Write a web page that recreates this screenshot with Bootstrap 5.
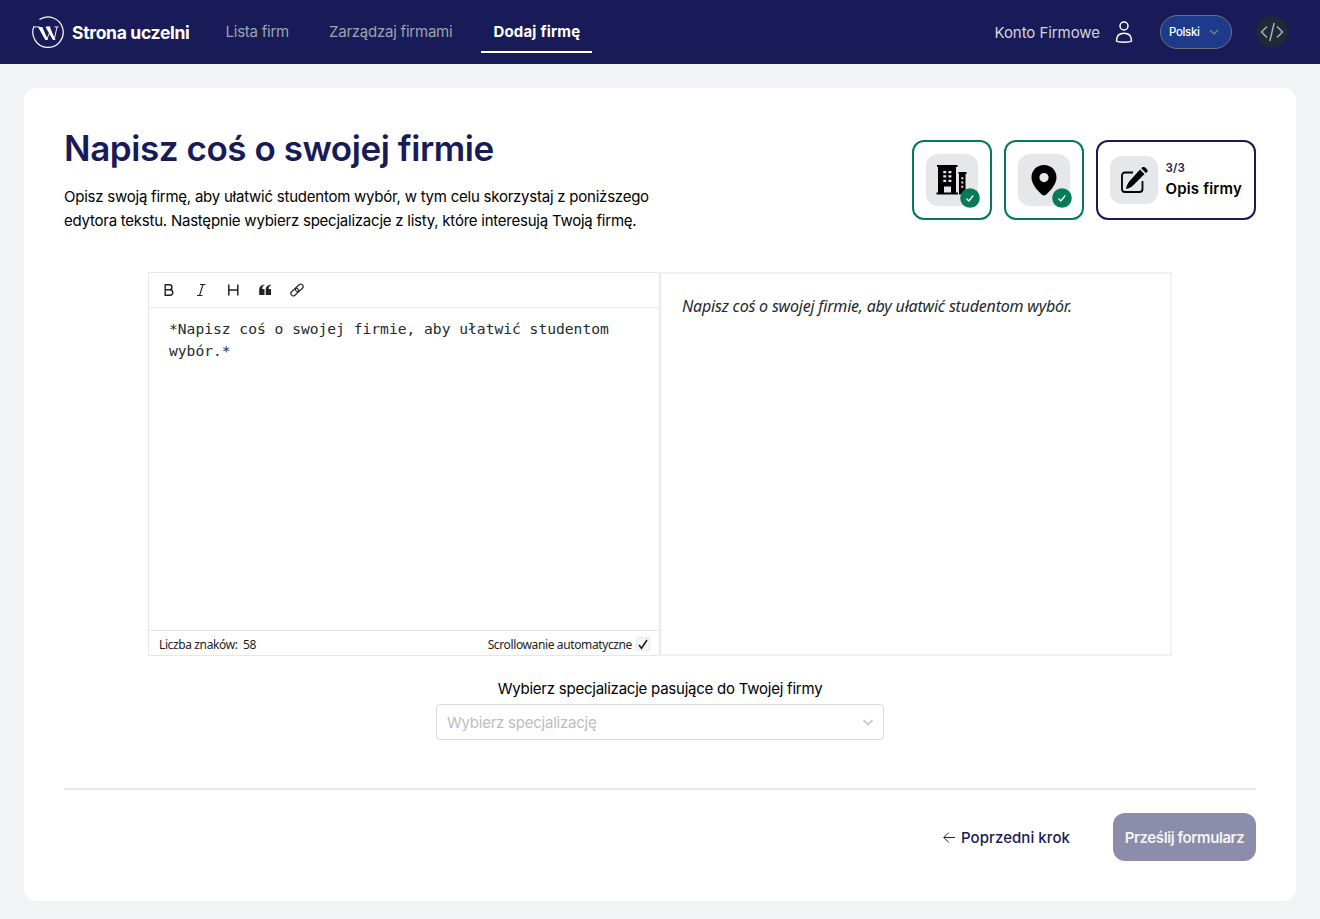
<!DOCTYPE html>
<html lang="pl">
<head>
<meta charset="utf-8">
<meta name="viewport" content="width=device-width, initial-scale=1">
<title>Dodaj firmę</title>
<link href="https://cdn.jsdelivr.net/npm/bootstrap@5.3.0/dist/css/bootstrap.min.css" rel="stylesheet">
<script src="https://cdn.jsdelivr.net/npm/bootstrap@5.3.0/dist/js/bootstrap.bundle.min.js" defer></script>
<style>
:root{--navy:#181b57;--green:#047a55}
body{font-family:Inter,"Liberation Sans",sans-serif;font-size:15px;letter-spacing:-.235px;line-height:24px;background:#f2f3f5;color:#000}
svg{display:block;flex:none}
.topbar{background:var(--navy);height:64px;padding:0 32px}
.brand-text{font-size:17.5px;font-weight:700;letter-spacing:-.31px;margin-left:8px;width:117.5px;white-space:nowrap;padding-top:1px}
.main-nav{gap:16px;margin-left:24px}
.topbar .nav-link{color:#9ca3af;height:43px;padding:10px 12px 0;margin-top:-1px;white-space:nowrap;border-bottom:2px solid transparent}
.topbar .nav-link.active{color:#fff;font-weight:700;letter-spacing:.2px;border-color:#fff;margin-left:1px}
.account{color:#d1d5db;letter-spacing:-.06px;padding-top:1px}
.lang{width:72px;height:34px;border:1px solid #6b7280;background:#1e3a8a;color:#fff;font-size:11.5px;font-weight:500;letter-spacing:-.36px;padding:0 12px 0 8px;margin:0 24px 0 20px}
.code-btn{width:32px;height:32px;background:#1f2937}
.panel{margin:24px 24px 18px;padding:40px;height:813px;border-radius:12px}
h1{font-size:35px;font-weight:600;line-height:40px;letter-spacing:-.44px;color:var(--navy);margin:0 0 17px}
.intro{width:600px}
.steps{gap:12px;margin-top:12px}
.step{height:80px;border:2px solid var(--green);border-radius:12px;padding:12px}
.step-done{width:80px}
.step-now{width:160px;border-color:var(--navy);font-weight:600;letter-spacing:.16px;line-height:20px}
.step-label{margin-top:-3px}
.step-now small{display:block;font-size:11.5px;font-weight:600;line-height:21px;color:var(--navy)}
.tile{width:52px;height:52px;background:#e5e7eb;border-radius:12px}
.step-now .tile{width:48px;height:48px;margin-right:8px}
.tick{right:-2px;bottom:-2px}
.editor{width:1024px;height:384px;margin:39px auto 0}
.pane{width:512px;border:1px solid #e6e6e6}
.tools{height:35px;border-bottom:1px solid #e6e6e6;padding-left:12px;gap:16px}
.source{font-family:"DejaVu Sans Mono",monospace;font-size:14.62px;letter-spacing:0;line-height:22px;color:#24292e;padding:10px 20px}
.foot{height:25px;border-top:1px solid #e6e6e6;font-family:"Noto Sans",sans-serif;font-size:12px;letter-spacing:-.38px;padding:3px 10px 0;color:#222}
.preview{width:512px;border:2px solid #f2f2f2;padding:20px;font-family:"Noto Sans",sans-serif;font-size:16px;font-style:italic;letter-spacing:-.2px;color:#24292e}
.autocheck{width:12px;height:12px;background:#f4f4f4;outline:1px solid #ebebeb;margin:-2px 0 0 5px}
.picker-label{margin-top:21px}
.picker{width:448px;height:36px;border:1px solid #d9d9d9;border-radius:4px;color:#bdbdbd;padding:1px 10px 0;margin-top:3px}
.rule{height:2px;background:#e5e7eb;margin-top:48px}
.actions{margin-top:23px;gap:43px}
.back{color:var(--navy);font-weight:500;letter-spacing:.07px;gap:6px;padding-top:1px}
.send{width:143px;height:48px;border-radius:12px;background:#8b8dab;color:#f3f4f6;font-weight:600;letter-spacing:-.41px;border:0;padding:1px 0 0;white-space:nowrap}
</style>
</head>
<body>
<header class="topbar d-flex align-items-center">
  <svg width="32" height="32" viewBox="0 0 32 32" fill="none" stroke="#fff"><path d="M7.500 3.600A15.200 15.200 0 1 1 1.900 10.500" stroke-width="1.200"/><path d="M1 10.900h6.500M14 10.900h4.500M22.500 10.900h4" stroke-width=".9"/><path d="M6 11h4.300l5.700 13h-2.600zM13.500 11h4.300l5.700 13h-2.600z" fill="#fff" stroke="none"/><path d="M14.700 23.500l3-7M22.200 23.500l2.800-12.500" stroke-width=".9"/></svg>
  <div class="brand-text text-white">Strona uczelni</div>
  <nav class="main-nav nav flex-nowrap">
    <a class="nav-link" href="#">Lista firm</a>
    <a class="nav-link" href="#">Zarządzaj firmami</a>
    <a class="nav-link active" href="#">Dodaj firmę</a>
  </nav>
  <div class="ms-auto d-flex align-items-center">
    <span class="account">Konto Firmowe</span>
    <svg class="ms-2" width="32" height="32" viewBox="0 0 32 32" fill="none" stroke="#fff" stroke-width="1.500"><circle cx="16" cy="10" r="4"/><path d="M8.500 25C8.500 20 11.500 17.300 16 17.300s7.500 2.700 7.500 7.700c-1.500 1.500-13.500 1.500-15 0z" stroke-linejoin="round"/></svg>
    <div class="lang rounded-pill d-flex align-items-center justify-content-between">Polski
      <svg width="10" height="10" viewBox="0 0 10 10" fill="none" stroke="#7b8290" stroke-width="1.300"><path d="M1 3l4 4 4-4"/></svg>
    </div>
    <div class="code-btn rounded-circle d-flex align-items-center justify-content-center">
      <svg width="24" height="20" viewBox="0 0 24 20" fill="none" stroke="#a8aeb9" stroke-width="1.500"><path d="M7 4.500L1.500 10 7 15.500M17 4.500l5.500 5.500-5.500 5.500M14.200 1L9.800 19"/></svg>
    </div>
  </div>
</header>
<main class="panel bg-white">
  <div class="d-flex justify-content-between align-items-start">
    <div class="intro">
      <h1>Napisz coś o swojej firmie</h1>
      <p class="mb-0">Opisz swoją firmę, aby ułatwić studentom wybór, w tym celu skorzystaj z poniższego<br>edytora tekstu. Następnie wybierz specjalizacje z listy, które interesują Twoją firmę.</p>
    </div>
    <div class="steps d-flex">
      <div class="step step-done">
        <div class="tile position-relative d-flex align-items-center justify-content-center">
          <svg width="32" height="32" viewBox="0 0 32 32"><path d="M1 1h20.500v2H20v25.500h2v2H.5v-2H2V3H1zM22.500 8h8v2H29.500v20.500h-6.500V10h-.5z"/><path fill="#e5e7eb" d="M7.300 7h2.900v2.200H7.300zM12.500 7h2.900v2.200h-2.900zM7.300 11.300h2.900v2.200H7.300zM12.500 11.300h2.900v2.200h-2.900zM7.300 15.800h2.900V18H7.300zM12.500 15.800h2.900V18h-2.900zM8 22.500h7v6H8zM25.300 13.300h2v2h-2zM25.300 17.500h2v2h-2zM25.300 21.700h2v2h-2z"/></svg>
          <svg class="tick position-absolute" width="20" height="20" viewBox="0 0 20 20"><circle cx="10" cy="10" r="9.800" fill="#047a55"/><path d="M6.500 10.500l2.300 2.500 4.500-5.500" fill="none" stroke="#fff" stroke-width="1.300"/></svg>
        </div>
      </div>
      <div class="step step-done">
        <div class="tile position-relative d-flex align-items-center justify-content-center">
          <svg width="32" height="32" viewBox="0 0 32 32"><path fill="#000" fill-rule="evenodd" d="M16 1C8.800 1 3.500 6.500 3.500 13.300c0 6.500 5 12.500 10.500 17.500q2 1.400 4 0c5.500-5 10.500-11 10.500-17.500C28.500 6.500 23.200 1 16 1zm0 8a4.600 4.600 0 1 1 0 9.200A4.600 4.600 0 0 1 16 9z"/></svg>
          <svg class="tick position-absolute" width="20" height="20" viewBox="0 0 20 20"><circle cx="10" cy="10" r="9.800" fill="#047a55"/><path d="M6.500 10.500l2.300 2.500 4.500-5.500" fill="none" stroke="#fff" stroke-width="1.300"/></svg>
        </div>
      </div>
      <div class="step step-now d-flex align-items-center">
        <div class="tile d-flex align-items-center justify-content-center">
          <svg width="28" height="28" viewBox="0 0 28 28"><path d="M13 6.500H5a3 3 0 0 0-3 3V23a3 3 0 0 0 3 3h14.500a3 3 0 0 0 3-3v-8" fill="none" stroke="#000" stroke-width="1.800"/><path d="M20 3.500l4.500 4.500L13 19.500c-1.800 1.800-4.300 2.800-7 3.500.5-2.700 1.500-5.500 3.200-7.500zM21.300 2.300l1-1c1.800-1.400 6.500 2.500 5 4.600l-1.400 1.200z"/></svg>
        </div>
        <div class="step-label text-nowrap"><small>3/3</small>Opis firmy</div>
      </div>
    </div>
  </div>

  <div class="editor d-flex">
    <div class="pane d-flex flex-column">
      <div class="tools d-flex align-items-center">
        <svg width="16" height="16" viewBox="0 0 16 16" fill="none" stroke="#222" stroke-width="1.400"><path d="M4.200 2.800h4.300a2.400 2.400 0 0 1 0 4.900H4.200h4.800a2.700 2.700 0 0 1 0 5.500H4.200V2.100"/></svg>
        <svg width="16" height="16" viewBox="0 0 16 16" fill="none" stroke="#222" stroke-width="1.100"><path d="M7 2.500h5.500M4 13.500h5.500M10 2.500l-3.500 11"/></svg>
        <svg width="16" height="16" viewBox="0 0 16 16" fill="none" stroke="#222" stroke-width="1.500"><path d="M3.800 2.500v11M12.800 2.500v11M3.800 8h9"/></svg>
        <svg width="16" height="16" viewBox="0 0 16 16" fill="#222"><path d="M7.500 3.200C5.900 3.700 5.200 5 5.200 7h2.300v6H2.200V8C2.200 5 4 2.800 7.500 2.800zM14 3.200c-1.600.5-2.300 1.800-2.300 3.800H14v6H8.700V8c0-3 1.800-5.200 5.300-5.200z"/></svg>
        <svg width="16" height="16" viewBox="0 0 16 16" fill="none" stroke="#222" stroke-width="1.100"><g transform="rotate(-43 8 8)"><rect x=".5" y="5.600" width="8.800" height="4.800" rx="2.400"/><rect x="6.700" y="5.600" width="8.800" height="4.800" rx="2.400"/></g></svg>
      </div>
      <div class="source flex-grow-1">*Napisz coś o swojej firmie, aby ułatwić studentom<br>wybór.*</div>
      <div class="foot d-flex align-items-center justify-content-between">
        <span>Liczba znaków:&nbsp; 58</span>
        <span class="d-flex align-items-center">Scrollowanie automatyczne
          <span class="autocheck"><svg width="12" height="12" viewBox="0 0 12 12" fill="none" stroke="#222" stroke-width="1.600"><path d="M2 7l2.500 3.300L10 2"/></svg></span>
        </span>
      </div>
    </div>
    <div class="preview">Napisz coś o swojej firmie, aby ułatwić studentom wybór.</div>
  </div>

  <div class="picker-label text-center">Wybierz specjalizacje pasujące do Twojej firmy</div>
  <div class="picker mx-auto d-flex align-items-center justify-content-between">Wybierz specjalizację
    <svg width="10" height="10" viewBox="0 0 10 10" fill="none" stroke="#c4c4c4" stroke-width="1.700"><path d="M.5 2L5 6.500 9.500 2"/></svg>
  </div>
  <div class="rule"></div>
  <div class="actions d-flex justify-content-end align-items-center">
    <a href="#" class="back d-flex align-items-center text-decoration-none">
      <svg width="12" height="12" viewBox="0 0 12 12" fill="none" stroke="#181b57"><path d="M12 5.500H1M5.800.5l-5 5 5 5"/></svg>Poprzedni krok</a>
    <button class="send" type="button">Prześlij formularz</button>
  </div>
</main>
</body>
</html>
